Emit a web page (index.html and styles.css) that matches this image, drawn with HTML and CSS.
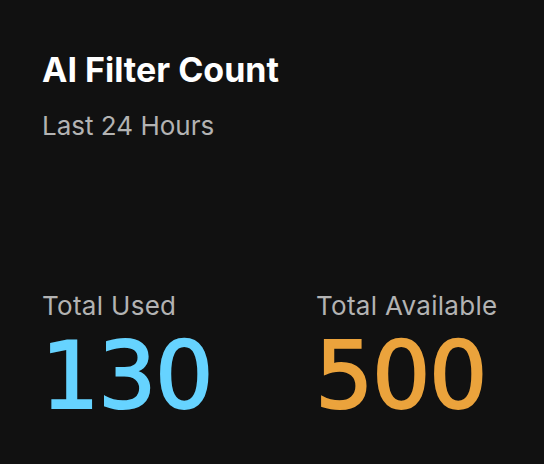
FILE: index.html
```html
<!DOCTYPE html>
<html lang="en">

<head>
    <meta charset="UTF-8">
    <meta name="viewport" content="width=device-width, initial-scale=1.0">
    <title>AI Filter Count</title>
    <link rel="stylesheet" href="styles.css">
</head>

<body>
    <div class="card">
        <div class="card-head">
            <h1>AI Filter Count</h1>
            <p class="period">Last 24 Hours</p>
        </div>

        <div class="stats">
            <div class="stat">
                <p class="stat-label">Total Used</p>
                <p class="stat-value used">130</p>
            </div>
            <div class="stat">
                <p class="stat-label">Total Available</p>
                <p class="stat-value available">500</p>
            </div>
        </div>
    </div>
</body>

</html>
```

FILE: styles.css
```css
body {
    margin: 0;
    background: #111111;
    font-family: Inter, "Open Sans", sans-serif;
}

.card {
    height: 464px;
    box-sizing: border-box;
    padding: 50px 42px 47px;
    display: flex;
    flex-direction: column;
}

.card-head > h1 {
    margin: 0;
    font-size: 34px;
    line-height: 40px;
    font-weight: 700;
    color: #ffffff;
}

.period {
    margin: 20px 0 0;
    font-size: 26px;
    line-height: 32px;
    color: #b3b3b3;
}

.stats {
    margin-top: auto;
    display: grid;
    grid-template-columns: 274px 1fr;
}

.stat-label {
    margin: 0 0 16px;
    font-size: 26px;
    line-height: 30px;
    letter-spacing: 0.3px;
    color: #b3b3b3;
}

.stat-value {
    margin: 0 0 0 -1px;
    font-family: "DejaVu Sans", sans-serif;
    font-size: 92px;
    line-height: 80px;
    letter-spacing: -1.5px;
    -webkit-text-stroke: 2px currentColor;
}

.used {
    color: #66d3ff;
}

.available {
    color: #eba33c;
}
```
